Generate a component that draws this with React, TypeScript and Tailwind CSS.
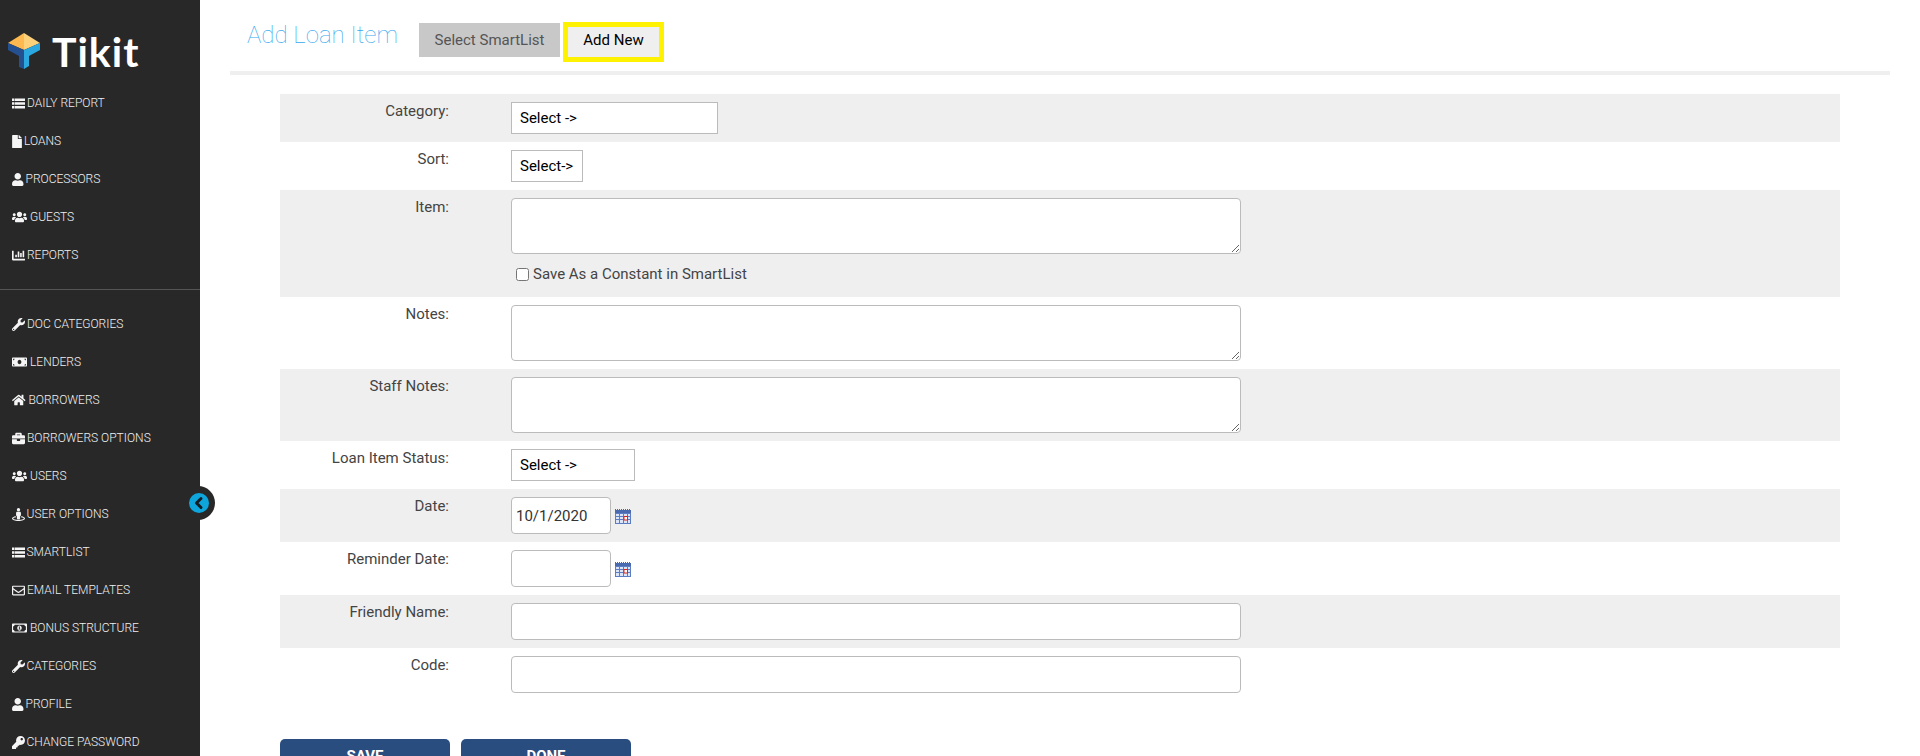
import React from "react";
import { FaFile, FaUser, FaUsers, FaChartBar, FaWrench, FaMoneyBill, FaHome, FaBriefcase, FaStreetView, FaRegEnvelope, FaRegMoneyBillAlt, FaKey } from "react-icons/fa";

type Item = { I: React.ComponentType<{ className?: string }>; t: string; w: string; s: string };

function ListIcon({ className }: { className?: string }) {
  return (
    <svg viewBox="0 0 13 13" fill="currentColor" className={className}>
      <path d="M0 1.5h2.5v2.5H0zM3 1.5h10v2.5H3zM0 5.2h2.5v2.6H0zM3 5.2h10v2.6H3zM0 9h2.5v2.5H0zM3 9h10v2.5H3z" />
    </svg>
  );
}

const top: Item[] = [
  { I: ListIcon, t: "DAILY REPORT", w: "w-[15px]", s: "h-[13px] w-[13px]" },
  { I: FaFile, t: "LOANS", w: "w-[12px]", s: "h-[13px] w-[10px]" },
  { I: FaUser, t: "PROCESSORS", w: "w-[13.5px]", s: "h-[13px] w-[11.5px]" },
  { I: FaUsers, t: "GUESTS", w: "w-[18px]", s: "h-[12px] w-[15px]" },
  { I: FaChartBar, t: "REPORTS", w: "w-[15px]", s: "h-[13px] w-[13px]" },
];
const bottom: Item[] = [
  { I: FaWrench, t: "DOC CATEGORIES", w: "w-[15px]", s: "h-[13px] w-[13px]" },
  { I: FaMoneyBill, t: "LENDERS", w: "w-[18px]", s: "h-[12px] w-[15px]" },
  { I: FaHome, t: "BORROWERS", w: "w-[16.5px]", s: "h-[12px] w-[13.5px]" },
  { I: FaBriefcase, t: "BORROWERS OPTIONS", w: "w-[15px]", s: "h-[13px] w-[13px]" },
  { I: FaUsers, t: "USERS", w: "w-[18px]", s: "h-[12px] w-[15px]" },
  { I: FaStreetView, t: "USER OPTIONS", w: "w-[14.5px]", s: "h-[13px] w-[13px]" },
  { I: ListIcon, t: "SMARTLIST", w: "w-[14.5px]", s: "h-[13px] w-[13px]" },
  { I: FaRegEnvelope, t: "EMAIL TEMPLATES", w: "w-[15px]", s: "h-[13px] w-[13px]" },
  { I: FaRegMoneyBillAlt, t: "BONUS STRUCTURE", w: "w-[18px]", s: "h-[12px] w-[15px]" },
  { I: FaWrench, t: "CATEGORIES", w: "w-[14.5px]", s: "h-[13px] w-[13px]" },
  { I: FaUser, t: "PROFILE", w: "w-[13.5px]", s: "h-[13px] w-[11.5px]" },
  { I: FaKey, t: "CHANGE PASSWORD", w: "w-[14.5px]", s: "h-[13px] w-[13px]" },
];

function Nav({ item }: { item: Item }) {
  const { I, t, w, s } = item;
  return (
    <div className="flex h-[38px] shrink-0 items-center pl-3 text-[12px] font-light text-[#f0f0f0]">
      <span className={`${w} flex shrink-0 items-center`}>
        <I className={`${s} shrink-0 text-[#f5f5f5]`} />
      </span>
      <span>{t}</span>
    </div>
  );
}

function Logo() {
  return (
    <svg width="32" height="36" viewBox="0 0 32 36" className="shrink-0">
      <path d="M16 0 L32 10 L16 17 Z" fill="#fdd07a" />
      <path d="M16 0 L0 10 L16 17 Z" fill="#fdb94f" />
      <path d="M0 10 L16 17 L16 36 L11 34 L11 23 L0 17 Z" fill="#24508f" />
      <path d="M32 10 L16 17 L16 36 L21 33 L21 23 L32 17 Z" fill="#2ba8e0" />
    </svg>
  );
}

function Calendar() {
  return (
    <svg width="16" height="15" viewBox="0 0 16 15" className="ml-1 mt-3 shrink-0">
      <path d="M0 .5h16" stroke="#666" strokeDasharray="1 1" />
      <rect x="0" y="1" width="16" height="3" fill="#4a6ab0" />
      <rect x="0" y="4" width="16" height="11" fill="#5c7dc4" />
      <path d="M1 5h3v2H1zM5 5h3v2H5zM9 5h3v2H9zM13 5h2v2h-2zM1 8h3v2H1zM5 8h3v2H5zM13 8h2v2h-2zM1 11h3v3H1zM5 11h3v3H5zM9 11h3v3H9zM13 11h2v3h-2z" fill="#dbe5f7" />
      <rect x="9" y="7.5" width="3.5" height="3.5" fill="#fff" stroke="#d8261c" />
    </svg>
  );
}

function Row({ label, h, shade, children }: { label: string; h: string; shade?: boolean; children: React.ReactNode }) {
  return (
    <div className={`flex ${h} pt-2 ${shade ? "bg-[#efefef]" : "bg-white"}`}>
      <label className="-mt-px w-[169px] shrink-0 text-right text-[15px] leading-5 text-[#444]">{label}</label>
      <div className="ml-[62px] flex-1">{children}</div>
    </div>
  );
}

const selectCls = "h-8 appearance-none rounded-none border border-[#bbb] bg-white pl-2 text-[15px] text-black outline-none";
const inputCls = "block rounded border border-[#bbb] bg-white text-[15px] text-[#333] outline-none";

export default function App() {
  return (
    <div className="relative flex h-screen overflow-hidden bg-white" style={{ fontFamily: "Roboto, sans-serif" }}>
      <aside className="relative flex w-[200px] shrink-0 flex-col bg-[#282828]">
        <div className="flex h-[84px] shrink-0 items-start pt-[33px] pl-2">
          <Logo />
          <span className="mt-[-6px] ml-3 text-[41px] leading-[50px] font-bold tracking-[1px] text-white" style={{ fontFamily: "Lato, sans-serif" }}>Tikit</span>
        </div>
        {top.map((x) => <Nav key={x.t} item={x} />)}
        <div className="mt-[15px] mb-[15px] h-px shrink-0 bg-[#555]" />
        {bottom.map((x) => <Nav key={x.t} item={x} />)}
      </aside>
      <div className="absolute left-[186px] top-[486px] flex h-[34px] w-[29px] items-center rounded-r-[17px] bg-[#282828] pl-[3px]">
        <div className="flex h-5 w-5 items-center justify-center rounded-full bg-[#0ea5dc]">
          <svg width="12" height="14" viewBox="0 0 12 14" fill="none" stroke="#151c20" strokeWidth="3" strokeLinecap="round" strokeLinejoin="round">
            <path d="M8 2.5 L3.5 7 L8 11.5" />
          </svg>
        </div>
      </div>
      <main className="min-w-0 flex-1 pl-[30px] pr-[30px]">
        <div className="flex h-[75px] items-start border-b-4 border-[#efefef] pl-[17px]">
          <h1 className="mt-[21px] w-[151px] text-2xl leading-7 font-thin whitespace-nowrap text-[#3aa9ee]">Add Loan Item</h1>
          <button className="mt-[23px] ml-[21px] h-[34px] w-[141px] bg-[#c8c8c8] text-[15px] text-[#555]">Select SmartList</button>
          <button className="mt-[22px] ml-[3px] h-10 w-[101px] border-[5px] border-[#fff200] bg-[#efefef] pb-[3px] text-[15px] text-black">Add New</button>
        </div>
        <form className="mt-[19px] ml-[50px] mr-[50px]">
          <Row label="Category:" h="h-12" shade>
            <select className={`${selectCls} w-[207px]`}><option>Select -&gt;</option></select>
          </Row>
          <Row label="Sort:" h="h-12">
            <select className={`${selectCls} w-[72px]`}><option>Select-&gt;</option></select>
          </Row>
          <Row label="Item:" h="h-[107px]" shade>
            <textarea className={`${inputCls} h-14 w-[730px]`} />
            <div className="mt-[9px] ml-[5px] flex items-center text-[15px] text-[#444]">
              <input type="checkbox" className="m-0 h-[13px] w-[13px]" />
              <span className="ml-1">Save As a Constant in SmartList</span>
            </div>
          </Row>
          <Row label="Notes:" h="h-[72px]">
            <textarea className={`${inputCls} h-14 w-[730px]`} />
          </Row>
          <Row label="Staff Notes:" h="h-[72px]" shade>
            <textarea className={`${inputCls} h-14 w-[730px]`} />
          </Row>
          <Row label="Loan Item Status:" h="h-[48px]">
            <select className={`${selectCls} w-[124px]`}><option>Select -&gt;</option></select>
          </Row>
          <Row label="Date:" h="h-[53px]" shade>
            <div className="flex">
              <input defaultValue="10/1/2020" className={`${inputCls} h-[37px] w-[100px] pl-1`} />
              <Calendar />
            </div>
          </Row>
          <Row label="Reminder Date:" h="h-[53px]">
            <div className="flex">
              <input className={`${inputCls} h-[37px] w-[100px] pl-1`} />
              <Calendar />
            </div>
          </Row>
          <Row label="Friendly Name:" h="h-[53px]" shade>
            <input className={`${inputCls} h-[37px] w-[730px]`} />
          </Row>
          <Row label="Code:" h="h-[53px]">
            <input className={`${inputCls} h-[37px] w-[730px]`} />
          </Row>
          <div className="mt-[38px] flex gap-[11px]">
            <button type="button" className="h-[34px] w-[170px] rounded-[5px] bg-[#2a4d80] text-[15px] font-bold text-white">SAVE</button>
            <button type="button" className="h-[34px] w-[170px] rounded-[5px] bg-[#2a4d80] text-[15px] font-bold text-white">DONE</button>
          </div>
        </form>
      </main>
    </div>
  );
}
